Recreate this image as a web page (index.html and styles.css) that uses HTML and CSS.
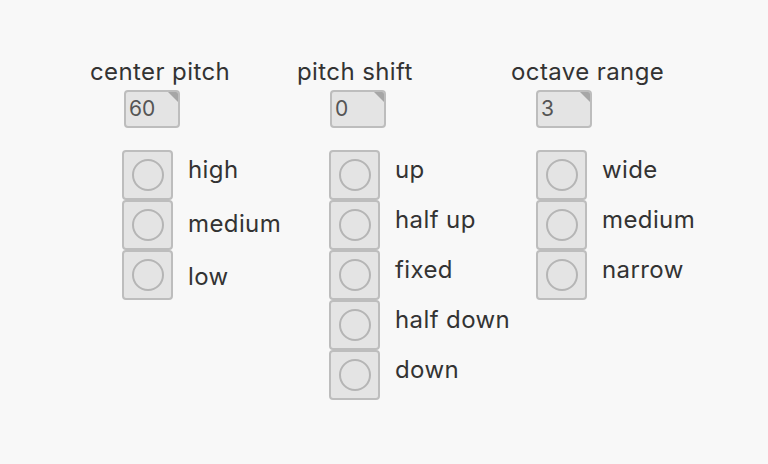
FILE: index.html
```html
<!DOCTYPE html>
<html lang="en">
<head>
  <meta charset="UTF-8" />
  <title>Pitch controls</title>
  <link rel="stylesheet" href="styles.css">
</head>
<body>

  <div class="patch">

    <!-- center pitch -->
    <div class="group group-center">
      <h2 class="group-title">center pitch</h2>
      <div class="numbox">60</div>
      <div class="options">
        <div class="radio-stack">
          <div class="radio"><span class="dot"></span></div>
          <div class="radio"><span class="dot"></span></div>
          <div class="radio"><span class="dot"></span></div>
        </div>
        <ul class="option-labels">
          <li>high</li>
          <li>medium</li>
          <li>low</li>
        </ul>
      </div>
    </div>

    <!-- pitch shift -->
    <div class="group group-shift">
      <h2 class="group-title">pitch shift</h2>
      <div class="numbox">0</div>
      <div class="options">
        <div class="radio-stack">
          <div class="radio"><span class="dot"></span></div>
          <div class="radio"><span class="dot"></span></div>
          <div class="radio"><span class="dot"></span></div>
          <div class="radio"><span class="dot"></span></div>
          <div class="radio"><span class="dot"></span></div>
        </div>
        <ul class="option-labels">
          <li>up</li>
          <li>half up</li>
          <li>fixed</li>
          <li>half down</li>
          <li>down</li>
        </ul>
      </div>
    </div>

    <!-- octave range -->
    <div class="group group-octave">
      <h2 class="group-title">octave range</h2>
      <div class="numbox">3</div>
      <div class="options">
        <div class="radio-stack">
          <div class="radio"><span class="dot"></span></div>
          <div class="radio"><span class="dot"></span></div>
          <div class="radio"><span class="dot"></span></div>
        </div>
        <ul class="option-labels">
          <li>wide</li>
          <li>medium</li>
          <li>narrow</li>
        </ul>
      </div>
    </div>

  </div>

</body>
</html>
```

FILE: styles.css
```css
* { box-sizing: border-box; }

body {
  margin: 0;
  background: #f8f8f8;
  color: #333;
  font-family: 'Inter', 'Liberation Sans', sans-serif;
}

.patch {
  display: flex;
  padding: 59px 0 0 122px;
}

.group {
  width: 207px;
}

.group-title {
  margin: 0 0 5px -32px;
  font-size: 24px;
  font-weight: 400;
  letter-spacing: 0.4px;
  line-height: 26px;
  white-space: nowrap;
}

.group-octave .group-title {
  margin-left: -25px;
}

/* number box */
.numbox {
  position: relative;
  width: 56px;
  height: 38px;
  margin-bottom: 22px;
  padding-left: 3px;
  background: #e4e4e4;
  border: 2px solid #bdbdbd;
  border-radius: 4px;
  color: #555;
  font-size: 21px;
  line-height: 34px;
  overflow: hidden;
}

.numbox::after {
  content: '';
  position: absolute;
  top: 0;
  right: 0;
  width: 10px;
  height: 10px;
  background: #a6a6a6;
  clip-path: polygon(0 0, 100% 0, 100% 100%);
}

.group-center .numbox { margin-left: 2px; }
.group-shift .numbox { margin-left: 1px; }

/* radio buttons */
.options {
  display: flex;
  gap: 15px;
}

.radio {
  display: flex;
  align-items: center;
  justify-content: center;
  width: 51px;
  height: 50px;
  background: #e4e4e4;
  border: 2px solid #bdbdbd;
  border-radius: 4px;
}

.dot {
  width: 32px;
  height: 32px;
  border: 2.5px solid #b5b5b5;
  border-radius: 50%;
}

.option-labels {
  list-style: none;
  margin: -5px 0 0;
  padding: 0;
  font-size: 24px;
  letter-spacing: 0.4px;
  line-height: 50px;
  white-space: nowrap;
}

.group-center .option-labels {
  margin-top: -7px;
  line-height: 53.5px;
}
```
